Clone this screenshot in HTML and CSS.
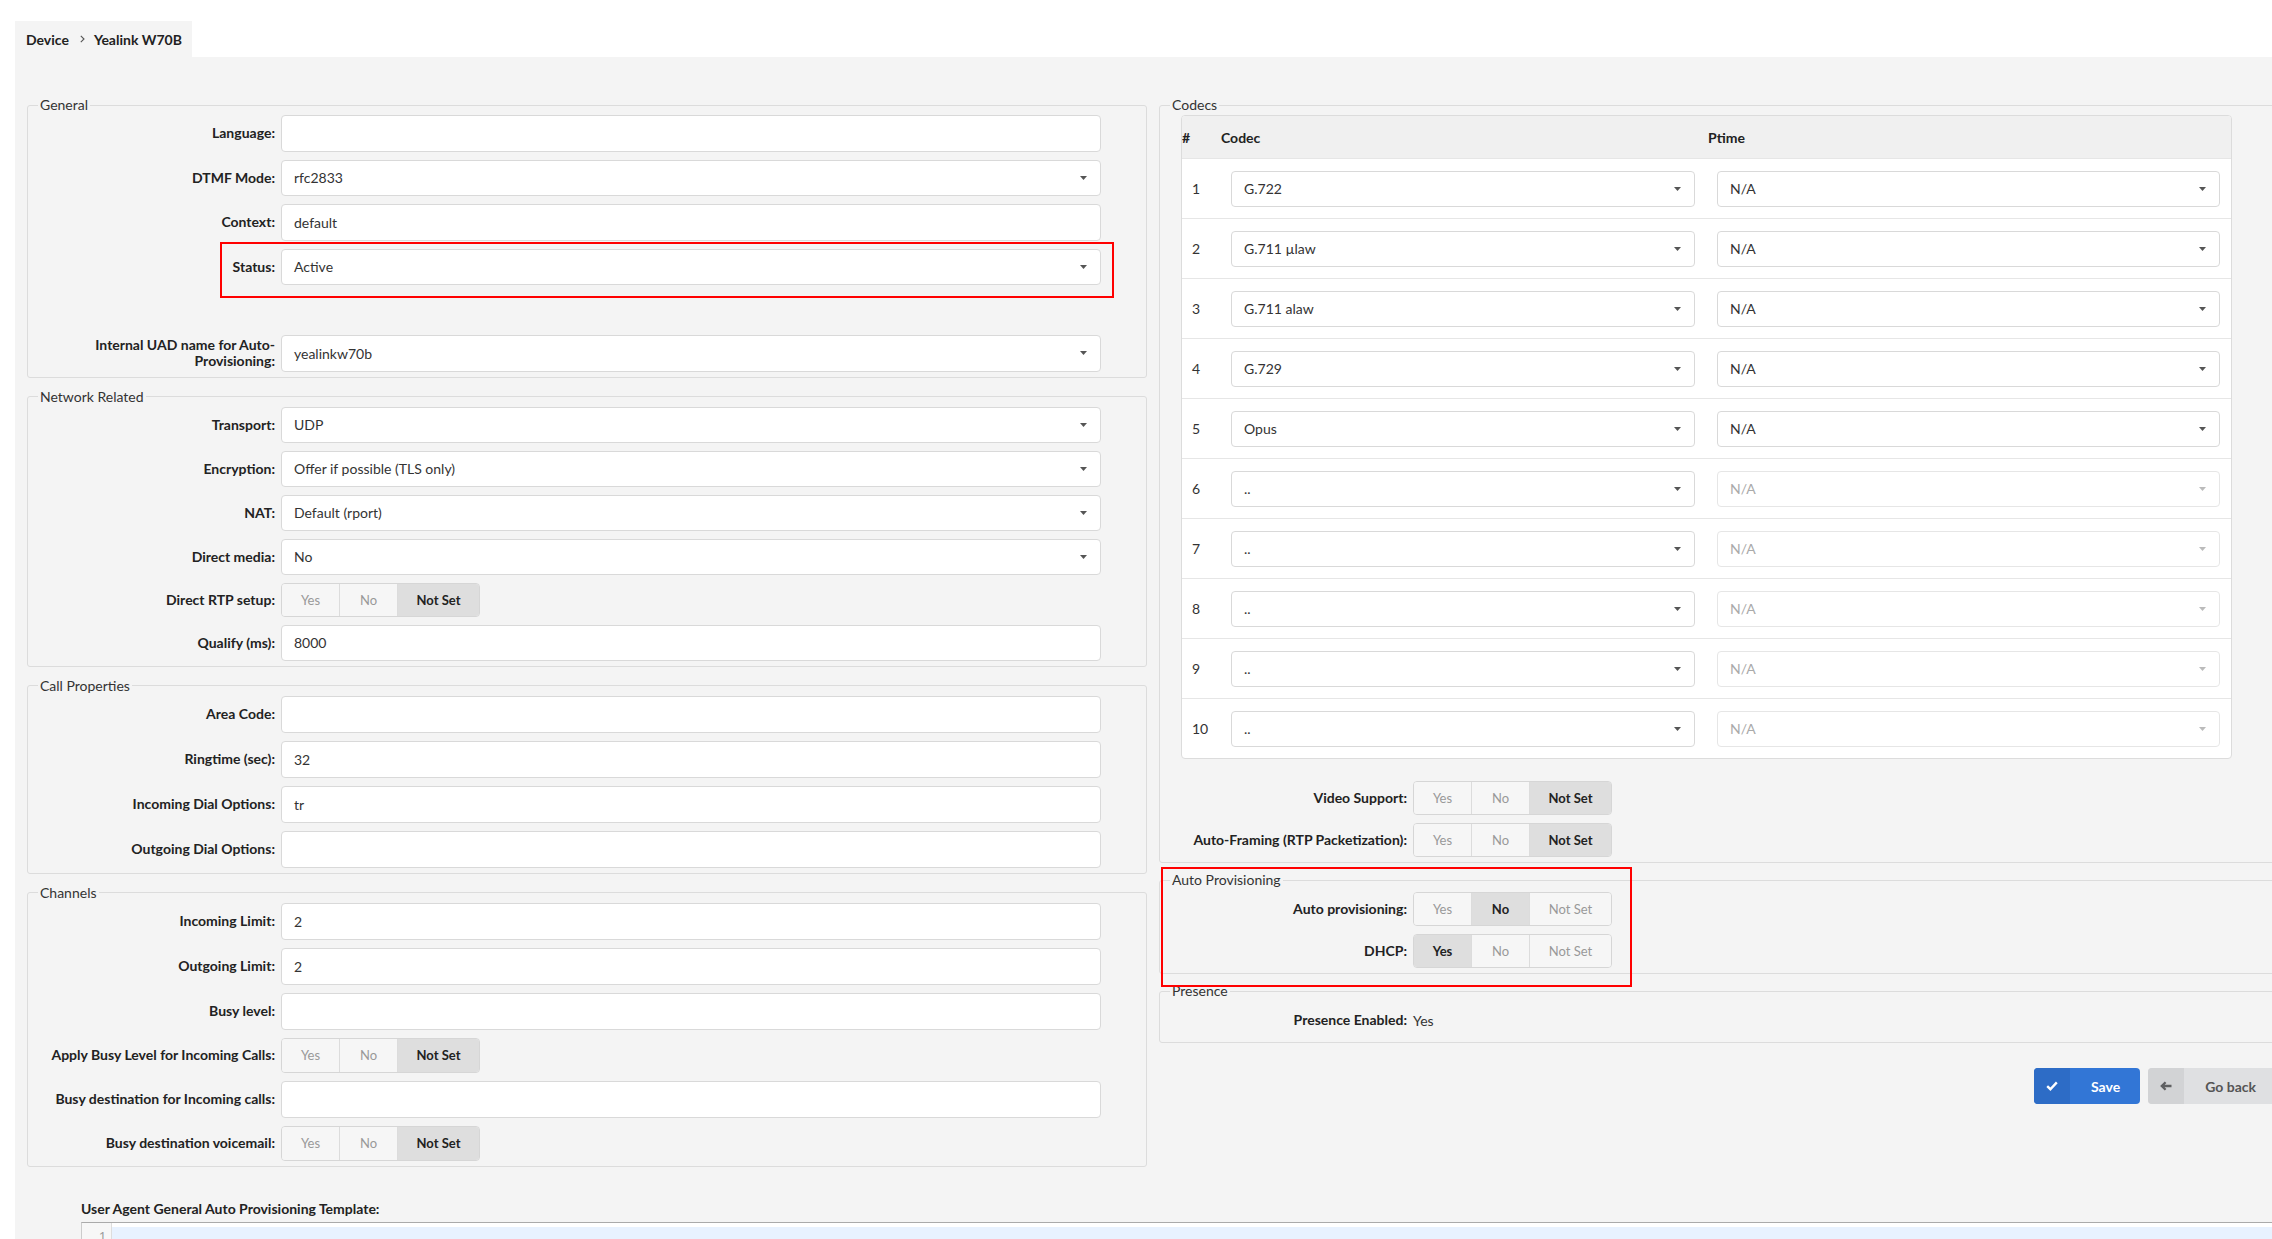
FILE: index.html
```html
<!DOCTYPE html>
<html>
<head>
<meta charset="utf-8">
<title>Device - Yealink W70B</title>
<link rel="stylesheet" href="styles.css">
</head>
<body>
<div class="page">
  <div class="crumbs">
    <span>Device</span>
    <svg class="chev" width="5" height="8" viewBox="0 0 5 8"><polyline points="0.8,0.8 4,4 0.8,7.2" fill="none" stroke="#555" stroke-width="1.1"/></svg>
    <span>Yealink W70B</span>
  </div>
  <div class="main">
    <div class="cols">
      <div class="col col-l">
        <fieldset class="fs fs-gen">
          <legend>General</legend>
          <div class="rows">
            <div class="row"><div class="lbl">Language:</div><div class="ctl"></div></div>
            <div class="row"><div class="lbl">DTMF Mode:</div><div class="ctl sel"><span>rfc2833</span><svg class="caret" width="7" height="4" viewBox="0 0 7 4"><path d="M0 0h7L3.5 4z"/></svg></div></div>
            <div class="row"><div class="lbl">Context:</div><div class="ctl">default</div></div>
            <div class="row marked"><div class="lbl">Status:</div><div class="ctl sel"><span>Active</span><svg class="caret" width="7" height="4" viewBox="0 0 7 4"><path d="M0 0h7L3.5 4z"/></svg></div><div class="mark mark-status"></div></div>
            <div class="row spacer"></div>
            <div class="row"><div class="lbl">Internal UAD name for Auto-Provisioning:</div><div class="ctl sel"><span>yealinkw70b</span><svg class="caret" width="7" height="4" viewBox="0 0 7 4"><path d="M0 0h7L3.5 4z"/></svg></div></div>
          </div>
        </fieldset>
        <fieldset class="fs fs-net">
          <legend>Network Related</legend>
          <div class="rows">
            <div class="row"><div class="lbl">Transport:</div><div class="ctl sel"><span>UDP</span><svg class="caret" width="7" height="4" viewBox="0 0 7 4"><path d="M0 0h7L3.5 4z"/></svg></div></div>
            <div class="row"><div class="lbl">Encryption:</div><div class="ctl sel"><span>Offer if possible (TLS only)</span><svg class="caret" width="7" height="4" viewBox="0 0 7 4"><path d="M0 0h7L3.5 4z"/></svg></div></div>
            <div class="row"><div class="lbl">NAT:</div><div class="ctl sel"><span>Default (rport)</span><svg class="caret" width="7" height="4" viewBox="0 0 7 4"><path d="M0 0h7L3.5 4z"/></svg></div></div>
            <div class="row"><div class="lbl">Direct media:</div><div class="ctl sel"><span>No</span><svg class="caret" width="7" height="4" viewBox="0 0 7 4"><path d="M0 0h7L3.5 4z"/></svg></div></div>
            <div class="row trow"><div class="lbl">Direct RTP setup:</div><div class="tg"><span class="t1">Yes</span><span class="t2">No</span><span class="t3 on">Not Set</span></div></div>
            <div class="row"><div class="lbl">Qualify (ms):</div><div class="ctl">8000</div></div>
          </div>
        </fieldset>
        <fieldset class="fs fs-call">
          <legend>Call Properties</legend>
          <div class="rows">
            <div class="row"><div class="lbl">Area Code:</div><div class="ctl"></div></div>
            <div class="row"><div class="lbl">Ringtime (sec):</div><div class="ctl">32</div></div>
            <div class="row"><div class="lbl">Incoming Dial Options:</div><div class="ctl">tr</div></div>
            <div class="row"><div class="lbl">Outgoing Dial Options:</div><div class="ctl"></div></div>
          </div>
        </fieldset>
        <fieldset class="fs fs-chan">
          <legend>Channels</legend>
          <div class="rows">
            <div class="row"><div class="lbl">Incoming Limit:</div><div class="ctl">2</div></div>
            <div class="row"><div class="lbl">Outgoing Limit:</div><div class="ctl">2</div></div>
            <div class="row"><div class="lbl">Busy level:</div><div class="ctl"></div></div>
            <div class="row trow"><div class="lbl">Apply Busy Level for Incoming Calls:</div><div class="tg"><span class="t1">Yes</span><span class="t2">No</span><span class="t3 on">Not Set</span></div></div>
            <div class="row"><div class="lbl">Busy destination for Incoming calls:</div><div class="ctl"></div></div>
            <div class="row trow"><div class="lbl">Busy destination voicemail:</div><div class="tg"><span class="t1">Yes</span><span class="t2">No</span><span class="t3 on">Not Set</span></div></div>
          </div>
        </fieldset>
      </div>

      <div class="col col-r">
        <fieldset class="fs">
          <legend>Codecs</legend>
          <div class="codecs">
            <div class="ct-head"><div class="h-num">#</div><div>Codec</div><div>Ptime</div></div>
            <div class="ct-row"><div class="num">1</div><div class="ctl sel c-sel"><span>G.722</span><svg class="caret" width="7" height="4" viewBox="0 0 7 4"><path d="M0 0h7L3.5 4z"/></svg></div><div class="ctl sel p-sel"><span>N/A</span><svg class="caret" width="7" height="4" viewBox="0 0 7 4"><path d="M0 0h7L3.5 4z"/></svg></div></div>
            <div class="ct-row"><div class="num">2</div><div class="ctl sel c-sel"><span>G.711 µlaw</span><svg class="caret" width="7" height="4" viewBox="0 0 7 4"><path d="M0 0h7L3.5 4z"/></svg></div><div class="ctl sel p-sel"><span>N/A</span><svg class="caret" width="7" height="4" viewBox="0 0 7 4"><path d="M0 0h7L3.5 4z"/></svg></div></div>
            <div class="ct-row"><div class="num">3</div><div class="ctl sel c-sel"><span>G.711 alaw</span><svg class="caret" width="7" height="4" viewBox="0 0 7 4"><path d="M0 0h7L3.5 4z"/></svg></div><div class="ctl sel p-sel"><span>N/A</span><svg class="caret" width="7" height="4" viewBox="0 0 7 4"><path d="M0 0h7L3.5 4z"/></svg></div></div>
            <div class="ct-row"><div class="num">4</div><div class="ctl sel c-sel"><span>G.729</span><svg class="caret" width="7" height="4" viewBox="0 0 7 4"><path d="M0 0h7L3.5 4z"/></svg></div><div class="ctl sel p-sel"><span>N/A</span><svg class="caret" width="7" height="4" viewBox="0 0 7 4"><path d="M0 0h7L3.5 4z"/></svg></div></div>
            <div class="ct-row"><div class="num">5</div><div class="ctl sel c-sel"><span>Opus</span><svg class="caret" width="7" height="4" viewBox="0 0 7 4"><path d="M0 0h7L3.5 4z"/></svg></div><div class="ctl sel p-sel"><span>N/A</span><svg class="caret" width="7" height="4" viewBox="0 0 7 4"><path d="M0 0h7L3.5 4z"/></svg></div></div>
            <div class="ct-row"><div class="num">6</div><div class="ctl sel c-sel"><span>..</span><svg class="caret" width="7" height="4" viewBox="0 0 7 4"><path d="M0 0h7L3.5 4z"/></svg></div><div class="ctl sel p-sel dis"><span>N/A</span><svg class="caret" width="7" height="4" viewBox="0 0 7 4"><path d="M0 0h7L3.5 4z"/></svg></div></div>
            <div class="ct-row"><div class="num">7</div><div class="ctl sel c-sel"><span>..</span><svg class="caret" width="7" height="4" viewBox="0 0 7 4"><path d="M0 0h7L3.5 4z"/></svg></div><div class="ctl sel p-sel dis"><span>N/A</span><svg class="caret" width="7" height="4" viewBox="0 0 7 4"><path d="M0 0h7L3.5 4z"/></svg></div></div>
            <div class="ct-row"><div class="num">8</div><div class="ctl sel c-sel"><span>..</span><svg class="caret" width="7" height="4" viewBox="0 0 7 4"><path d="M0 0h7L3.5 4z"/></svg></div><div class="ctl sel p-sel dis"><span>N/A</span><svg class="caret" width="7" height="4" viewBox="0 0 7 4"><path d="M0 0h7L3.5 4z"/></svg></div></div>
            <div class="ct-row"><div class="num">9</div><div class="ctl sel c-sel"><span>..</span><svg class="caret" width="7" height="4" viewBox="0 0 7 4"><path d="M0 0h7L3.5 4z"/></svg></div><div class="ctl sel p-sel dis"><span>N/A</span><svg class="caret" width="7" height="4" viewBox="0 0 7 4"><path d="M0 0h7L3.5 4z"/></svg></div></div>
            <div class="ct-row"><div class="num">10</div><div class="ctl sel c-sel"><span>..</span><svg class="caret" width="7" height="4" viewBox="0 0 7 4"><path d="M0 0h7L3.5 4z"/></svg></div><div class="ctl sel p-sel dis"><span>N/A</span><svg class="caret" width="7" height="4" viewBox="0 0 7 4"><path d="M0 0h7L3.5 4z"/></svg></div></div>
          </div>
          <div class="rows after-table">
            <div class="row trow"><div class="lbl">Video Support:</div><div class="tg"><span class="t1">Yes</span><span class="t2">No</span><span class="t3 on">Not Set</span></div></div>
            <div class="row trow"><div class="lbl">Auto-Framing (RTP Packetization):</div><div class="tg"><span class="t1">Yes</span><span class="t2">No</span><span class="t3 on">Not Set</span></div></div>
          </div>
        </fieldset>
        <div class="ap-wrap">
          <fieldset class="fs fs-ap">
            <legend>Auto Provisioning</legend>
            <div class="rows">
              <div class="row trow"><div class="lbl">Auto provisioning:</div><div class="tg"><span class="t1">Yes</span><span class="t2 on">No</span><span class="t3">Not Set</span></div></div>
              <div class="row trow"><div class="lbl">DHCP:</div><div class="tg"><span class="t1 on">Yes</span><span class="t2">No</span><span class="t3">Not Set</span></div></div>
            </div>
          </fieldset>
          <div class="mark mark-ap"></div>
        </div>
        <fieldset class="fs fs-pres">
          <legend>Presence</legend>
          <div class="rows">
            <div class="row vrow"><div class="lbl">Presence Enabled:</div><div class="val">Yes</div></div>
          </div>
        </fieldset>
        <div class="btns">
          <div class="btn save"><span class="ic"><svg width="12" height="10" viewBox="0 0 12 10"><polyline points="1.2,5.2 4.4,8.2 10.8,1.4" fill="none" stroke="#fff" stroke-width="2.4"/></svg></span><span class="tx">Save</span></div>
          <div class="btn back"><span class="ic"><svg width="12" height="10" viewBox="0 0 12 10"><path d="M11.5 5H2.5M5.6 1.3L1.8 5l3.8 3.7" fill="none" stroke="#5f6062" stroke-width="2.3"/></svg></span><span class="tx">Go back</span></div>
        </div>
      </div>
    </div>

    <div class="tpl">
      <div class="tpl-lbl">User Agent General Auto Provisioning Template:</div>
      <div class="editor">
        <div class="gutter"><div class="ln">1</div></div>
        <div class="code"><div class="line active"></div></div>
      </div>
    </div>
  </div>
</div>
</body>
</html>
```
FILE: styles.css
```css
* { box-sizing: border-box; }
html, body { margin: 0; height: 100%; overflow: hidden; }
body {
  background: #fff;
  font-family: Lato, "Noto Sans", "Liberation Sans", sans-serif;
  font-size: 14px;
  color: #333;
}
.page { padding: 21px 0 0 15px; }

.crumbs {
  display: inline-flex;
  align-items: center;
  height: 36px;
  padding: 0 10px 0 11px;
  background: #f4f4f4;
  font-weight: 700;
  color: #222;
}
.chev { margin: 0 9px 0 11px; }

.main {
  background: #f4f4f4;
  padding: 40px 0 0 12px;
  min-height: 1300px;
}
.cols { display: flex; gap: 12px; align-items: flex-start; }
.col { flex: none; }
.col-l { width: 1120px; }
.col-r { width: 1130px; }

.fs {
  margin: 0 0 11px;
  padding: 2px 0 5px 12px;
  border: 1px solid #dcdcdc;
  border-radius: 3px;
  min-width: 0;
}
.col-r .fs { margin-bottom: 9px; }
.fs-ap, .fs-pres { padding-top: 4px; }
.fs legend {
  padding: 0 2px;
  margin-left: -2px;
  font-size: 14px;
  line-height: 16px;
  color: #333;
}
.rows { display: flex; flex-direction: column; gap: 8px; }
.row {
  display: grid;
  grid-template-columns: 235px 820px;
  column-gap: 6px;
  align-items: center;
}
.col-r .row { grid-template-columns: 235px auto; justify-content: start; }
.spacer { height: 34px; }
.lbl {
  text-align: right;
  font-weight: 700;
  color: #222;
  line-height: 16px;
}
.ctl {
  height: 36px;
  background: #fff;
  border: 1px solid #d9d9d9;
  border-radius: 4px;
  padding: 0 12px;
  display: flex;
  align-items: center;
  color: #333;
  white-space: nowrap;
}
.fs-gen .ctl { height: 36.5px; }
.fs-call .ctl, .fs-chan .ctl { height: 37px; }
.sel { justify-content: space-between; padding-right: 13px; }
.caret { fill: #555; flex: none; }
.dis { border-color: #e6e6e6; color: #aaa; }
.dis .caret { fill: #bbb; }

.tg {
  display: flex;
  height: 34px;
  border: 1px solid #d6d6d6;
  border-radius: 4px;
  overflow: hidden;
  font-size: 13px;
  width: max-content;
}
.fs-chan .tg { height: 35px; }
.tg span {
  display: flex;
  align-items: center;
  justify-content: center;
  background: #f6f6f6;
  color: #999;
  border-left: 1px solid #dcdcdc;
}
.tg .t1 { width: 57px; border-left: 0; }
.tg .t2 { width: 58px; }
.tg .t3 { width: 82px; }
.tg .on { background: #dedede; color: #222; font-weight: 700; }

.marked { position: relative; }
.mark { position: absolute; border: 2px solid #f00; pointer-events: none; }
.mark-status { left: 180px; width: 894px; top: -7px; height: 56px; }
.ap-wrap { position: relative; }
.mark-ap { left: 2px; top: -5px; width: 471px; height: 120px; }

.codecs {
  width: 1051px;
  margin-left: 9px;
  border: 1px solid #dcdcdc;
  border-radius: 4px;
  overflow: hidden;
  background: #fff;
}
.ct-head, .ct-row {
  display: grid;
  grid-template-columns: 39px 487px 1fr;
  align-items: center;
}
.ct-head { height: 42px; background: #f0f0f0; font-weight: 700; color: #222; }
.h-num { padding-left: 0; }
.ct-row { height: 60px; border-top: 1px solid #e6e6e6; }
.num { padding-left: 10px; color: #333; }
.c-sel { margin-left: 10px; width: 464px; }
.p-sel { margin-left: 9px; margin-right: 11px; }
.after-table { margin-top: 22px; }

.vrow { height: 34px; }
.val { color: #333; }

.btns {
  display: flex;
  justify-content: flex-end;
  gap: 8px;
  margin-top: 25px;
  padding-right: 13px;
}
.btn {
  display: flex;
  height: 36px;
  border-radius: 4px;
  overflow: hidden;
  font-weight: 700;
}
.btn .ic { width: 36px; display: flex; align-items: center; justify-content: center; }
.btn .tx { display: flex; align-items: center; padding: 0 20px 0 21px; }
.save { background: #3276d6; color: #fff; }
.save .ic { background: #2d6cc6; }
.back { background: #dfe0e2; color: #555; }
.back .ic { background: #d2d3d5; }

.tpl { margin: 21px 0 0 54px; }
.tpl-lbl { font-weight: 700; color: #222; line-height: 20px; margin-bottom: 3px; }
.editor {
  display: flex;
  border-top: 1px solid #aaa;
  border-left: 1px solid #ccc;
  background: #fff;
  height: 200px;
}
.gutter {
  width: 30px;
  flex: none;
  background: #f7f7f7;
  border-right: 1px solid #ddd;
  padding-top: 4px;
}
.ln {
  height: 18px;
  line-height: 18px;
  text-align: right;
  padding-right: 5px;
  color: #999;
  font-size: 12px;
}
.code { flex: 1; padding-top: 4px; }
.line { height: 18px; }
.active { background: #e8f2ff; }
```
